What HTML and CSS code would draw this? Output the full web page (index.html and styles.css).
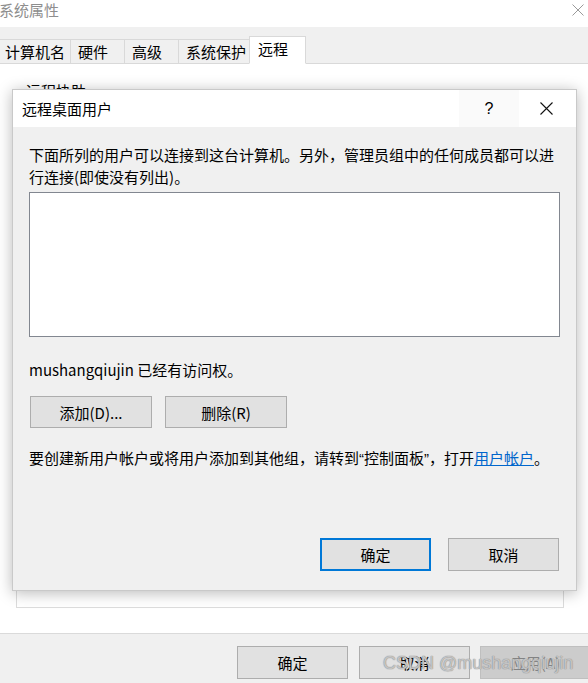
FILE: index.html
```html
<!DOCTYPE html>
<html lang="zh-CN">
<head>
<meta charset="UTF-8" />
<title>系统属性</title>
<link rel="stylesheet" href="styles.css">
</head>
<body>

<div class="window">
  <div class="titlebar">
    <span class="win-title">系统属性</span>
    <svg class="win-close" width="12" height="12" viewBox="0 0 12 12"><path d="M0.5 0.5L11.5 11.5M11.5 0.5L0.5 11.5" stroke="#9a9a9a" stroke-width="1" fill="none"/></svg>
  </div>

  <div class="tabs">
    <div class="tab first wide">计算机名</div>
    <div class="tab">硬件</div>
    <div class="tab">高级</div>
    <div class="tab wide">系统保护</div>
    <div class="tab active">远程</div>
  </div>

  <div class="page">
    <div class="group">
      <span class="legend">远程协助</span>
    </div>
  </div>

  <div class="footer">
    <button class="btn">确定</button>
    <button class="btn">取消</button>
    <button class="btn disabled">应用(A)</button>
  </div>
</div>

<!-- 弹出的对话框 -->
<div class="dialog">
  <div class="dlg-title">
    <span class="dlg-caption">远程桌面用户</span>
    <span class="dlg-help">?</span>
    <svg class="dlg-close" width="13" height="13" viewBox="0 0 13 13"><path d="M0.5 0.5L12.5 12.5M12.5 0.5L0.5 12.5" stroke="#111" stroke-width="1.1" fill="none"/></svg>
  </div>
  <div class="dlg-body">
    <p class="desc">下面所列的用户可以连接到这台计算机。另外，管理员组中的任何成员都可以进行连接(即使没有列出)。</p>
    <div class="listbox"></div>
    <p class="access">mushangqiujin 已经有访问权。</p>
    <div class="row">
      <button class="btn small">添加(D)...</button>
      <button class="btn small">删除(R)</button>
    </div>
    <p class="hint">要创建新用户帐户或将用户添加到其他组，请转到<span class="q">“</span>控制面板<span class="q">”</span>，打开<a href="#">用户帐户</a>。</p>
    <div class="dlg-actions">
      <button class="btn primary">确定</button>
      <button class="btn">取消</button>
    </div>
  </div>
</div>

<div class="watermark">CSDN @mushangqiujin</div>

</body>
</html>
```

FILE: styles.css
```css
* {
  margin: 0; padding: 0; box-sizing: border-box;
}
html, body {
  width: 588px;
  height: 683px;
  overflow: hidden;
  background: #fff;
  font-family: "Noto Sans CJK SC", "Noto Sans", sans-serif;
  font-size: 15px;
  color: #000;
}
.window {
  width: 588px;
  height: 683px;
  display: flex;
  flex-direction: column;
}
.titlebar {
  height: 27px;
  display: flex;
  align-items: center;
  justify-content: space-between;
  padding: 0 4px 8px 0;
}
.win-title {
  color: #8e8e8e;
  line-height: 18px;
  margin-left: -1px;
}
.tabs {
  height: 37px;
  background: #f0f0f0;
  border-bottom: 1px solid #d9d9d9;
  display: flex;
  align-items: flex-end;
}
.tab {
  height: 25px;
  width: 54px;
  padding-left: 7px;
  line-height: 24px;
  border: 1px solid #d9d9d9;
  border-left: none;
  margin-bottom: -1px;
}
.tab.first {
  margin-left: -2px;
}
.tab.wide {
  width: 71px;
}
.tab.first.wide {
  width: 73px;
}
.tab.active {
  background: #fff;
  height: 28px;
  width: 57px;
  padding-left: 8px;
  border-left: 1px solid #d9d9d9;
  margin-left: -1px;
  border-bottom: 1px solid #fff;
}
.page {
  flex: 1;
  background: #fff;
  padding: 27px 24px 25px 16px;
  display: flex;
}
.group {
  flex: 1;
  border: 1px solid #dcdcdc;
  position: relative;
}
.legend {
  position: absolute;
  top: -11px;
  left: 7px;
  background: #fff;
  padding: 0 2px;
  line-height: 20px;
}
.footer {
  height: 50px;
  background: #f0f0f0;
  border-top: 1px solid #dadada;
  display: flex;
  gap: 11px;
  padding: 12px 0 0 237px;
}
.btn {
  font-family: inherit;
  font-size: 15px;
  color: #000;
  width: 111px;
  height: 33px;
  background: #e1e1e1;
  border: 1px solid #adadad;
  flex-shrink: 0;
}
.btn.disabled {
  background: #cccccc;
  border-color: #bfbfbf;
  color: #838383;
  margin-left: -1px;
}
.btn.small {
  width: 122px;
  height: 32px;
}
.btn.primary {
  border: 2px solid #0078d7;
}

.dialog {
  position: absolute;
  left: 12px;
  top: 89px;
  width: 565px;
  height: 502px;
  background: #f0f0f0;
  border: 1px solid #c9c9c9;
  box-shadow: 0 2px 14px rgba(0,0,0,0.28);
  display: flex;
  flex-direction: column;
}
.dlg-title {
  height: 37px;
  background: #fff;
  display: flex;
  align-items: center;
  padding-left: 9px;
}
.dlg-caption {
  flex: 1;
  line-height: 20px;
}
.dlg-help {
  width: 60px;
  height: 37px;
  line-height: 37px;
  text-align: center;
  font-family: "Liberation Sans", sans-serif;
  font-size: 16px;
  background: #fafafa;
  margin-right: 21px;
}
.dlg-close {
  margin-right: 23px;
}
.dlg-body {
  flex: 1;
  padding: 17px 17px 0 16px;
  display: flex;
  flex-direction: column;
}
.desc, .access, .hint {
  line-height: 22px;
  color: #000;
}
.listbox {
  margin-top: 4px;
  width: 531px;
  height: 145px;
  background: #fff;
  border: 1px solid #828790;
}
.access {
  margin-top: 22px;
}
.row {
  display: flex;
  gap: 13px;
  margin-top: 15px;
  padding-left: 1px;
}
.hint {
  margin-top: 19px;
  white-space: nowrap;
}
.hint .q {
  font-family: "Liberation Sans", sans-serif;
}
.hint a {
  color: #0066cc;
  text-decoration: underline;
}
.dlg-actions {
  display: flex;
  justify-content: flex-end;
  gap: 17px;
  margin-top: 68px;
}

.watermark {
  position: absolute;
  left: 383px;
  top: 650px;
  white-space: nowrap;
  font-family: "Liberation Sans", sans-serif;
  font-size: 18px;
  line-height: 26px;
  color: rgba(255,255,255,0.5);
  text-shadow: 0 0 1px #888, 0 0 1px #888;
}
```
